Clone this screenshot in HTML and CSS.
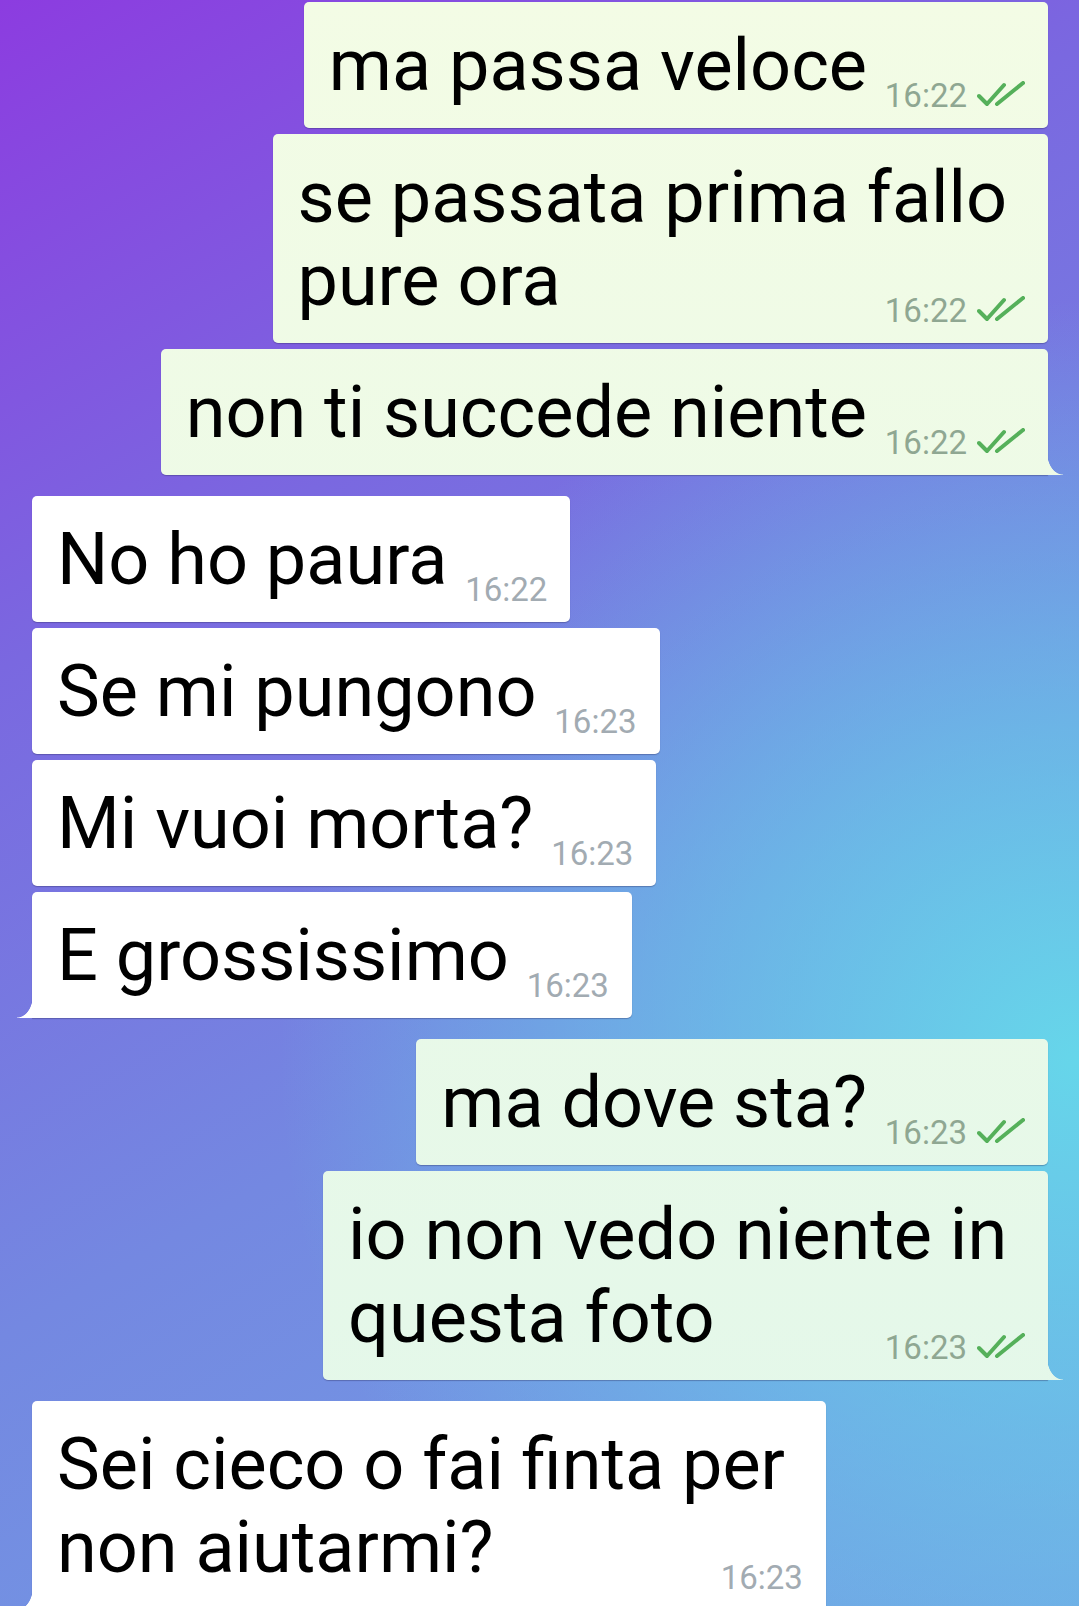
FILE: index.html
```html
<!DOCTYPE html>
<html lang="it">
<head>
    <meta charset="UTF-8" />
    <title>Chat</title>
    <link rel="stylesheet" href="styles.css">
</head>
<body>
    <div class="chat">
        <div class="msg out">
            <div class="bubble">
                <div class="text">ma passa veloce<span class="spacer"></span></div>
                <div class="meta"><span class="time">16:22</span><svg class="ticks" viewBox="0 0 48 26"><path d="M2 15 L10 23 L27 4 M20 23 L46 2"/></svg></div>
            </div>
        </div>
        <div class="msg out">
            <div class="bubble">
                <div class="text">se passata prima fallo&nbsp;<br>pure ora<span class="spacer"></span></div>
                <div class="meta"><span class="time">16:22</span><svg class="ticks" viewBox="0 0 48 26"><path d="M2 15 L10 23 L27 4 M20 23 L46 2"/></svg></div>
            </div>
        </div>
        <div class="msg out">
            <div class="bubble tail">
                <div class="text">non ti succede niente<span class="spacer"></span></div>
                <div class="meta"><span class="time">16:22</span><svg class="ticks" viewBox="0 0 48 26"><path d="M2 15 L10 23 L27 4 M20 23 L46 2"/></svg></div>
            </div>
        </div>

        <div class="msg in new">
            <div class="bubble">
                <div class="text">No ho paura<span class="spacer"></span></div>
                <div class="meta"><span class="time">16:22</span></div>
            </div>
        </div>
        <div class="msg in">
            <div class="bubble">
                <div class="text">Se mi pungono<span class="spacer"></span></div>
                <div class="meta"><span class="time">16:23</span></div>
            </div>
        </div>
        <div class="msg in">
            <div class="bubble">
                <div class="text">Mi vuoi morta?<span class="spacer"></span></div>
                <div class="meta"><span class="time">16:23</span></div>
            </div>
        </div>
        <div class="msg in">
            <div class="bubble tail">
                <div class="text">E grossissimo<span class="spacer"></span></div>
                <div class="meta"><span class="time">16:23</span></div>
            </div>
        </div>

        <div class="msg out new">
            <div class="bubble">
                <div class="text">ma dove sta?<span class="spacer"></span></div>
                <div class="meta"><span class="time">16:23</span><svg class="ticks" viewBox="0 0 48 26"><path d="M2 15 L10 23 L27 4 M20 23 L46 2"/></svg></div>
            </div>
        </div>
        <div class="msg out">
            <div class="bubble tail">
                <div class="text">io non vedo niente in&nbsp;<br>questa foto<span class="spacer"></span></div>
                <div class="meta"><span class="time">16:23</span><svg class="ticks" viewBox="0 0 48 26"><path d="M2 15 L10 23 L27 4 M20 23 L46 2"/></svg></div>
            </div>
        </div>

        <div class="msg in new">
            <div class="bubble tail">
                <div class="text">Sei cieco o fai finta per&nbsp;<br>non aiutarmi?<span class="spacer"></span></div>
                <div class="meta"><span class="time">16:23</span></div>
            </div>
        </div>
    </div>
</body>
</html>
```

FILE: styles.css
```css
html, body {
    margin: 0;
    height: 100%;
}

body {
    font-family: Roboto, "Noto Sans", sans-serif;
    overflow: hidden;
    background:
        radial-gradient(ellipse 1000px 950px at 100% 66%, rgba(102, 214, 234, 1) 0%, rgba(102, 214, 234, 0.45) 45%, rgba(102, 214, 234, 0) 80%),
        linear-gradient(150deg, #8c3ce0 0%, #7a68e0 30%, #7488e1 60%, #72a2e5 100%);
}

.chat {
    padding: 2px 31px 0 32px;
    display: flex;
    flex-direction: column;
    gap: 6px;
}

.msg {
    display: flex;
}

.msg.out {
    justify-content: flex-end;
}

.msg.new {
    margin-top: 15px;
}

.bubble {
    position: relative;
    padding: 22px 23px 16px 25px;
    font-size: 72px;
    line-height: 83px;
    color: #000;
    border-radius: 5px;
    box-shadow: 0 1px 1px rgba(40, 40, 90, 0.35);
}

.in .bubble {
    background: #fff;
}

.out .bubble {
    background: linear-gradient(180deg, #f3fce5 0%, #e2f7ea 100%) fixed;
}

.spacer {
    display: inline-block;
    width: 158px;
}

.in .spacer {
    width: 100px;
}

.meta {
    display: flex;
    justify-content: flex-end;
    align-items: center;
    gap: 10px;
    height: 33px;
    margin-top: -28px;
    font-size: 33px;
    line-height: 33px;
}

.time {
    color: #8fa792;
}

.in .time {
    color: #a2abb2;
}

.ticks {
    width: 48px;
    height: 26px;
    margin-top: -4px;
}

.ticks path {
    fill: none;
    stroke: #55b05a;
    stroke-width: 4;
    stroke-linecap: round;
    stroke-linejoin: round;
}

/* bubble tail on the last message of a group */
.bubble.tail::after {
    content: "";
    position: absolute;
    bottom: 0;
    width: 16px;
    height: 22px;
    background: inherit;
}

.out .bubble.tail {
    border-bottom-right-radius: 0;
}

.out .bubble.tail::after {
    right: -15px;
    -webkit-mask: radial-gradient(16px 22px at 100% 0, transparent 96%, #000 100%);
    mask: radial-gradient(16px 22px at 100% 0, transparent 96%, #000 100%);
}

.in .bubble.tail {
    border-bottom-left-radius: 0;
}

.in .bubble.tail::after {
    left: -15px;
    -webkit-mask: radial-gradient(16px 22px at 0 0, transparent 96%, #000 100%);
    mask: radial-gradient(16px 22px at 0 0, transparent 96%, #000 100%);
}
```
